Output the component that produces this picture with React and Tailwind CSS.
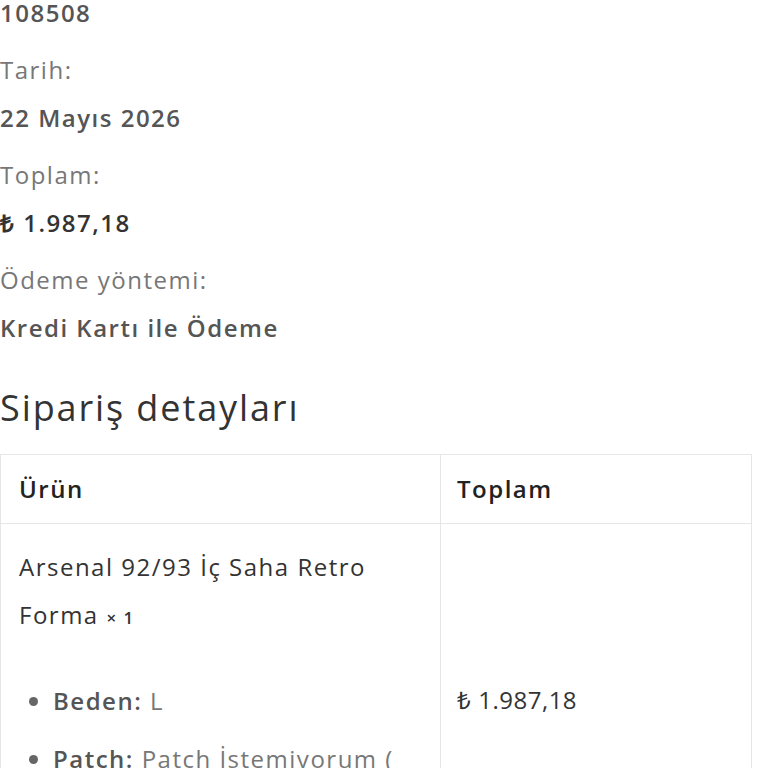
import React from 'react';

const details = [
  { label: 'Tarih:', value: '22 Mayıs 2026' },
  { label: 'Toplam:', value: '₺ 1.987,18', dark: true },
  { label: 'Ödeme yöntemi:', value: 'Kredi Kartı ile Ödeme' },
];

export default function App() {
  return (
    <div className="min-h-[768px] bg-white font-['Open_Sans',sans-serif] text-[24px] leading-[48px] tracking-[1.5px] text-[#777]">
      {/* Order overview */}
      <ul className="-mt-[11px] flex flex-col gap-[9px]">
        <li>
          <div className="font-semibold text-[#555]">108508</div>
        </li>
        {details.map((d) => (
          <li key={d.label}>
            <div>{d.label}</div>
            <div className={`font-semibold ${d.dark ? 'text-[#333]' : 'text-[#555]'}`}>{d.value}</div>
          </li>
        ))}
      </ul>

      {/* Order details */}
      <h2 className="mt-[37px] text-[36px] leading-[38px] tracking-[1.9px] text-[#333]">Sipariş detayları</h2>

      <table className="mt-[27px] w-[752px] border-collapse border border-[#e6e6e6] text-[#333]">
        <thead>
          <tr>
            <th className="w-[440px] border border-[#e6e6e6] px-[18px] py-[10px] text-left font-semibold text-[#222]">Ürün</th>
            <th className="border border-[#e6e6e6] px-[16px] py-[10px] text-left font-semibold text-[#222]">Toplam</th>
          </tr>
        </thead>
        <tbody>
          <tr>
            <td className="border border-[#e6e6e6] px-[18px] pt-[19px] pb-[19px] align-top">
              <div>
                Arsenal 92/93 İç Saha Retro
                <br />
                Forma <strong className="text-[17px] font-semibold">× 1</strong>
              </div>
              <ul className="mt-[35px] mb-[25px] flex flex-col gap-[10px] pl-[34px] list-disc marker:text-[#666]">
                <li className="text-[#777]">
                  <strong className="font-semibold text-[#555]">Beden:</strong> L
                </li>
                <li className="text-[#777]">
                  <strong className="font-semibold text-[#555]">Patch:</strong> Patch İstemiyorum (
                  <br />
                  Ücretsiz)
                </li>
              </ul>
            </td>
            <td className="border border-[#e6e6e6] px-[16px] align-middle tracking-[0.5px] text-[#333]">₺ 1.987,18</td>
          </tr>
        </tbody>
      </table>
    </div>
  );
}
